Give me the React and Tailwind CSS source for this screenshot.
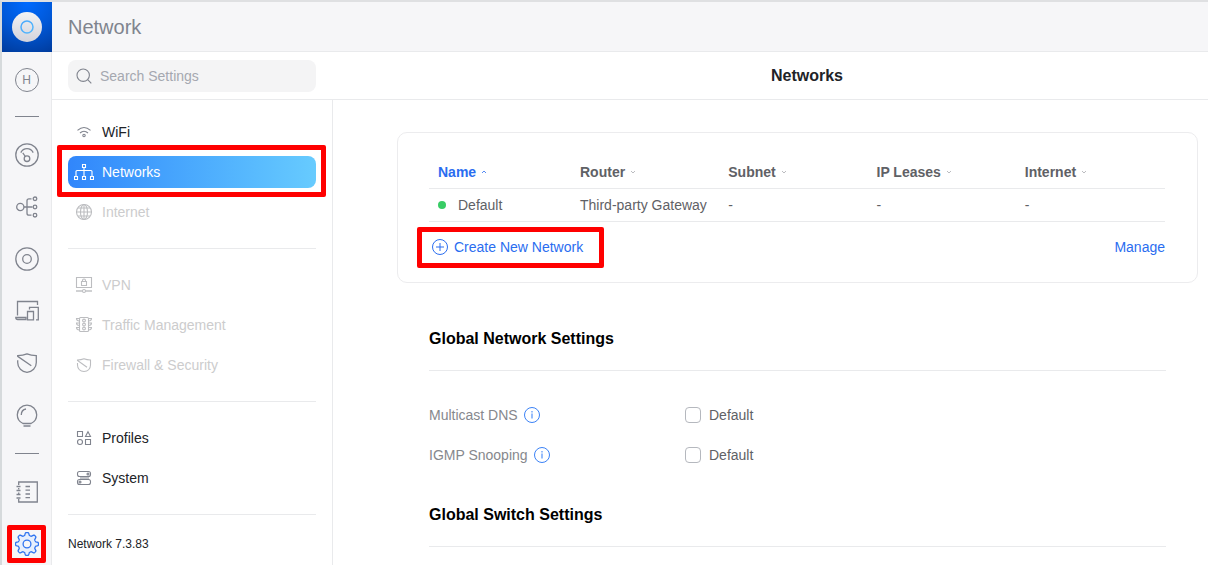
import React, { useState } from 'react'

// Outline of the settings cog: eight soft teeth around a 24x24 box
const cogPoints = Array.from({ length: 128 }, (_, i) => {
  const a = (i / 128) * Math.PI * 2
  const r = 10.1 + 1.4 * Math.tanh(2.2 * Math.cos(8 * a))
  return `${(12 + r * Math.cos(a)).toFixed(2)},${(12 + r * Math.sin(a)).toFixed(2)}`
}).join(' ')

function RailIcon({ children }) {
  return (
    <svg viewBox="0 0 24 24" className="w-6 h-6" fill="none" stroke="currentColor" strokeWidth="1.3" aria-hidden="true">
      {children}
    </svg>
  )
}

function NavIcon({ children }) {
  return (
    <svg viewBox="0 0 20 20" className="w-5 h-5 shrink-0" fill="none" stroke="currentColor" strokeWidth="1.1" aria-hidden="true">
      {children}
    </svg>
  )
}

const railItems = [
  {
    label: 'Dashboard',
    icon: (
      <>
        <circle cx="12" cy="12" r="11.2" />
        <path d="M5.8 9.6C7 7.2 9.3 5.7 12 5.7s5 1.5 6.2 3.9" />
        <circle cx="12" cy="15.7" r="2.8" />
        <path d="M7.8 9.800l2.500 3.700" />
      </>
    ),
  },
  {
    label: 'Topology',
    icon: (
      <>
        <circle cx="5.3" cy="12" r="3.6" />
        <circle cx="20" cy="3.8" r="1.8" />
        <circle cx="20" cy="12" r="1.8" />
        <circle cx="20" cy="20.2" r="1.8" />
        <path d="M9 12h8.500M16.500 3.800h-2.500a2 2 0 0 0-2 2v12.400a2 2 0 0 0 2 2h2.500" />
      </>
    ),
  },
  {
    label: 'UniFi Devices',
    icon: (
      <>
        <circle cx="12" cy="12" r="11.2" />
        <circle cx="12" cy="12" r="4.3" />
      </>
    ),
  },
  {
    label: 'Client Devices',
    icon: (
      <>
        <path d="M2.500 16.500v-14h20V6" />
        <path d="M11 18.500H.8c0 1.200.7 2 2 2H11z" />
        <path d="M12.500 12.500h6v8.300h-6zM14.500 10.500V8.300h8.800v12.500H21" />
      </>
    ),
  },
  {
    label: 'Security',
    icon: (
      <path d="M2.700 9.300v2.200c0 5.500 4 9.300 9.300 9.800 5.300-.5 9.300-4.300 9.300-9.800V4.600c-3.400 0-6.300-.4-9.300-1.700-3 1.300-6 1.700-9.300 1.700v.7l13.600 9.500" />
    ),
  },
  {
    label: 'Insights',
    icon: (
      <>
        <path d="M8 20.500C4.500 19 2.300 15.700 2.300 11.800a9.700 9.700 0 0 1 19.400 0c0 3.900-2.200 7.200-5.700 8.700z" />
        <path d="M8.500 23h7M6.300 12c0-3.200 1.800-5.500 4.700-6" />
      </>
    ),
  },
]

const navGroups = [
  [
    {
      label: 'WiFi',
      icon: (
        <>
          <path d="M3.500 8.300c4-3.500 9-3.500 13 0M6 11c2.500-2.200 5.500-2.200 8 0" />
          <circle cx="10" cy="13.500" r="1.200" />
        </>
      ),
    },
    {
      label: 'Networks',
      active: true,
      icon: (
        <>
          <path d="M8.500 2.500h3v3h-3zM.5 14.500h3v3h-3zM8.500 14.500h3v3h-3zM16.500 14.500h3v3h-3z" />
          <path d="M10 5.500v9M2 14.500V9.500a1 1 0 0 1 1-1h14a1 1 0 0 1 1 1v5" />
        </>
      ),
    },
    {
      label: 'Internet',
      disabled: true,
      icon: (
        <>
          <circle cx="10" cy="10" r="7.500" />
          <ellipse cx="10" cy="10" rx="3.500" ry="7.500" />
          <path d="M10 2.500v15M2.500 10h15M4 6h12M4 14h12" />
        </>
      ),
    },
  ],
  [
    {
      label: 'VPN',
      disabled: true,
      icon: (
        <>
          <path d="M2.500 2.500h15v10h-15zM7.500 6.500h5v4h-5z" />
          <path d="M8.500 6.500V5.500a1.500 1.500 0 0 1 3 0v1" />
          <path d="M2 16h6.500M11.500 16H18" strokeWidth="1.800" strokeOpacity="0.700" />
          <circle cx="10" cy="16" r="1.500" />
        </>
      ),
    },
    {
      label: 'Traffic Management',
      disabled: true,
      icon: (
        <>
          <rect x="5.500" y="2.500" width="9" height="14" rx="1" />
          <circle cx="10" cy="5.500" r="1.400" />
          <circle cx="10" cy="9.500" r="1.400" />
          <circle cx="10" cy="13.500" r="1.400" />
          <path d="M5.500 3.500h-3c0 1.500 1 2.500 3 2.500M5.500 8h-3c0 1.500 1 2.500 3 2.500M5.500 12.500h-3c0 1.500 1 2.500 3 2.500M14.500 3.500h3c0 1.500-1 2.500-3 2.500M14.500 8h3c0 1.500-1 2.500-3 2.500M14.500 12.500h3c0 1.500-1 2.500-3 2.500" />
        </>
      ),
    },
    {
      label: 'Firewall & Security',
      disabled: true,
      icon: (
        <path d="M3.500 8v2c0 3.700 2.800 6.200 6.500 6.500 3.700-.3 6.500-2.800 6.500-6.500V5c-2.400 0-4.400-.3-6.500-1.200C7.900 4.700 5.800 5 3.500 5v.4l9.500 6.800" />
      ),
    },
  ],
  [
    {
      label: 'Profiles',
      icon: (
        <>
          <path d="M3.500 3.500h5v5h-5zM11.500 11.500h5v5h-5zM14 3.700l2.500 4.800h-5z" />
          <circle cx="6" cy="14" r="2.500" />
        </>
      ),
    },
    {
      label: 'System',
      icon: (
        <>
          <path d="M6 8.500h9v3H6z" fill="currentColor" stroke="none" fillOpacity="0.5" />
          <rect x="3.500" y="3.500" width="13" height="5" rx="2" />
          <rect x="3.500" y="11.500" width="13" height="5" rx="2" />
          <circle cx="14" cy="6" r="1" />
          <circle cx="6" cy="14" r="1" />
        </>
      ),
    },
  ],
]

const columns = ['Name', 'Router', 'Subnet', 'IP Leases', 'Internet']

const networks = [
  { name: 'Default', router: 'Third-party Gateway', subnet: '-', leases: '-', internet: '-' },
]

function Highlight({ className }) {
  return <span className={`absolute border-5 border-[#ff0000] rounded-xs pointer-events-none ${className}`} />
}

function Rail() {
  return (
    <aside className="w-[50px] shrink-0 bg-[#f6f6f8] text-[#80848e] border-r border-[#e9eaec] flex flex-col">
      <a href="#home" aria-label="Home" className="block h-[50px] -mr-px shrink-0">
        <svg viewBox="0 0 50 50" className="w-[50px] h-[50px]" aria-hidden="true">
          <defs>
            <radialGradient id="logoBg" cx="0.5" cy="0" r="1.1">
              <stop offset="0" stopColor="#006aff" />
              <stop offset="0.5" stopColor="#0058d8" />
              <stop offset="1" stopColor="#003c9e" />
            </radialGradient>
            <linearGradient id="logoDisc" x1="0" y1="0" x2="0" y2="1">
              <stop offset="0" stopColor="#f2f2f4" />
              <stop offset="1" stopColor="#d3d3db" />
            </linearGradient>
            <linearGradient id="logoRing" x1="0" y1="0" x2="1" y2="1">
              <stop offset="0" stopColor="#4aa8fc" />
              <stop offset="1" stopColor="#54b8fd" />
            </linearGradient>
          </defs>
          <rect width="50" height="50" fill="url(#logoBg)" />
          <circle cx="25" cy="25" r="15" fill="url(#logoDisc)" />
          <circle cx="25" cy="25" r="6" fill="none" stroke="url(#logoRing)" strokeWidth="1.500" />
        </svg>
      </a>
      <a href="#site" className="h-14 shrink-0 flex items-center justify-center">
        <span className="w-6 h-6 rounded-full border border-current flex items-center justify-center text-xs">H</span>
      </a>
      <hr className="w-6 mx-auto mt-2 mb-3 shrink-0 border-current" />
      {railItems.map((item) => (
        <a key={item.label} href="#" aria-label={item.label} className="h-[52px] shrink-0 flex items-center justify-center">
          <RailIcon>{item.icon}</RailIcon>
        </a>
      ))}
      <hr className="w-6 mx-auto my-3 shrink-0 border-current" />
      <a href="#log" aria-label="System Log" className="h-[52px] shrink-0 flex items-center justify-center">
        <RailIcon>
          <path d="M3.700 5V2h18.600v20H3.700v-3M3.700 8v1.500M3.700 12.500V14" />
          <path d="M1.500 6.500h4M1.500 10.500h4M1.500 14.500h4M1.500 18h4M10.500 6.500h4.500M10.500 10.200h4.500M10.500 14h4.500M10.500 17.700h4.500" />
        </RailIcon>
      </a>
      <a href="#settings" aria-label="Settings" className="relative h-[52px] shrink-0 flex items-center justify-center text-[#2f74f0]">
        <RailIcon>
          <polygon points={cogPoints} fill="#e6effd" />
          <circle cx="12" cy="12" r="3.900" fill="#f6f6f8" />
        </RailIcon>
        <Highlight className="left-[5px] right-[5px] top-[7px] bottom-[7px]" />
      </a>
    </aside>
  )
}

function NavItem({ item }) {
  const tone = item.active
    ? 'bg-linear-to-r from-[#3186fb] to-[#67cbfe] text-white'
    : item.disabled
      ? 'text-[#cccccd]'
      : 'text-[#212327]'
  const iconTone = item.active ? 'text-white' : item.disabled ? 'text-[#bcbdc0]' : 'text-[#80848e]'

  return (
    <a href="#" aria-disabled={item.disabled} className={`relative h-8 pl-1.5 flex items-center gap-2 rounded-lg text-sm ${tone}`}>
      <span className={iconTone}><NavIcon>{item.icon}</NavIcon></span>
      {item.label}
      {item.active && <Highlight className="-left-[11px] -right-[10px] -top-[11px] -bottom-[9px]" />}
    </a>
  )
}

function SettingRow({ id, label }) {
  const [checked, setChecked] = useState(false)

  return (
    <div className="h-10 flex items-center text-sm">
      <div className="w-64 shrink-0 flex items-center gap-1.5 text-[#86888d]">
        {label}
        <button type="button" aria-label={`About ${label}`} className="text-[#3b82f6]">
          <svg viewBox="0 0 16 16" className="w-4 h-4" fill="none" stroke="currentColor" aria-hidden="true">
            <circle cx="8" cy="8" r="7.500" />
            <path d="M8 6.500v5M8 4v1.500" strokeWidth="1.500" strokeOpacity="0.700" />
          </svg>
        </button>
      </div>
      <input
        id={id}
        type="checkbox"
        checked={checked}
        onChange={(e) => setChecked(e.target.checked)}
        className="appearance-none w-4 h-4 rounded border border-[#b5b8be] bg-white checked:bg-[#006fff]"
      />
      <label htmlFor={id} className="pl-2 text-[#5f6166]">Default</label>
    </div>
  )
}

function Section({ title, children }) {
  return (
    <section className="pt-7 px-8">
      <h2 className="pb-[19px] border-b border-[#e9eaec] text-base leading-6 font-bold text-black">{title}</h2>
      <div className="pt-6">{children}</div>
    </section>
  )
}

function NetworksCard() {
  return (
    <div className="mt-8 mb-4 pl-[31px] pr-8 pt-[23px] pb-2.5 border border-[#ececee] rounded-[10px] text-sm text-[#5f6166]">
      <table className="w-full table-fixed border-collapse text-left">
        <thead>
          <tr className="h-8 border-b border-[#e9eaec]">
            {columns.map((col, i) => (
              <th key={col} className={i === 0 ? 'w-[143px] pl-[9px] py-0 font-bold text-[#2a6df0]' : 'px-2 py-0 font-bold'}>
                <button type="button" className="flex items-center gap-1.5">
                  {col}
                  <svg viewBox="0 0 4 4" className={i === 0 ? 'w-1 h-1' : 'w-1 h-1 text-[#a9abb0]'} fill="none" stroke="currentColor" strokeWidth="0.800" aria-hidden="true">
                    <path d={i === 0 ? 'M0 3l2-2 2 2' : 'M0 1l2 2 2-2'} />
                  </svg>
                </button>
              </th>
            ))}
          </tr>
        </thead>
        <tbody>
          {networks.map((net) => (
            <tr key={net.name} className="h-[33px] border-b border-[#e9eaec]">
              <td className="pl-[9px] py-0">
                <span className="flex items-center gap-3">
                  <span className="w-2 h-2 rounded-full bg-[#38cc65]" />
                  {net.name}
                </span>
              </td>
              <td className="px-2 py-0 whitespace-nowrap">{net.router}</td>
              <td className="px-2 py-0">{net.subnet}</td>
              <td className="px-2 py-0">{net.leases}</td>
              <td className="px-2 py-0">{net.internet}</td>
            </tr>
          ))}
        </tbody>
      </table>
      <div className="h-[50px] pl-[3px] flex items-center justify-between text-[#2a6df0]">
        <button type="button" className="relative flex items-center gap-1.5">
          <svg viewBox="0 0 16 16" className="w-4 h-4" fill="none" stroke="currentColor" aria-hidden="true">
            <circle cx="8" cy="8" r="7.500" />
            <path d="M8 4v8M4 8h8" />
          </svg>
          Create New Network
          <Highlight className="-left-[15px] -right-[21px] -top-[10px] -bottom-[11px]" />
        </button>
        <a href="#manage">Manage</a>
      </div>
    </div>
  )
}

export default function App() {
  return (
    <div className="h-screen overflow-hidden flex bg-white border-t-2 border-l-2 border-t-[#dfe0e2] border-l-[#d6dadc] font-['Liberation_Sans',Arial,sans-serif]">
      <Rail />
      <div className="flex-1 min-w-0 flex flex-col">
        <header className="h-[50px] shrink-0 px-4 flex items-center bg-[#f6f6f8] border-b border-[#e9eaec]">
          <h1 className="text-xl text-[#80848e]">Network</h1>
        </header>

        <div className="h-12 shrink-0 flex items-center border-b border-[#e9eaec]">
          <div className="w-[280px] shrink-0 px-4">
            <label className="h-8 px-2 flex items-center gap-2 rounded-lg bg-[#f4f4f5] text-[#80848e]">
              <svg viewBox="0 0 16 16" className="w-4 h-4 shrink-0" fill="none" stroke="currentColor" strokeWidth="1.100" aria-hidden="true">
                <circle cx="7.200" cy="7.200" r="6.200" />
                <path d="M11.700 11.700l3.600 3.600" />
              </svg>
              <input
                type="text"
                aria-label="Search Settings"
                placeholder="Search Settings"
                className="flex-1 min-w-0 bg-transparent text-sm outline-none placeholder:text-[#a5a8b0]"
              />
            </label>
          </div>
          <h2 className="flex-1 pl-[74px] text-center text-base font-bold text-[#212327]">Networks</h2>
        </div>

        <div className="flex-1 min-h-0 flex">
          <nav className="w-[281px] shrink-0 px-4 pt-4 border-r border-[#e9eaec]">
            {navGroups.map((group, i) => (
              <div key={i} className="flex flex-col gap-2 pb-5 mb-5 border-b border-[#e9eaec]">
                {group.map((item) => (
                  <NavItem key={item.label} item={item} />
                ))}
              </div>
            ))}
            <p className="text-xs leading-[18px] text-[#212327]">Network 7.3.83</p>
          </nav>

          <main className="flex-1 min-w-0 pl-16 pr-[10px] overflow-hidden">
            <NetworksCard />
            <Section title="Global Network Settings">
              <SettingRow id="mdns" label="Multicast DNS" />
              <SettingRow id="igmp" label="IGMP Snooping" />
            </Section>
            <Section title="Global Switch Settings" />
          </main>
        </div>
      </div>
    </div>
  )
}
